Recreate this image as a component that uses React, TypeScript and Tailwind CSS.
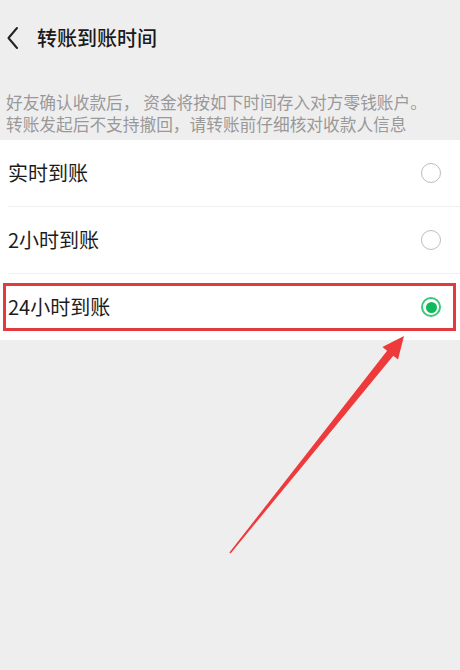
import React from "react";

function Radio({ checked }: { checked?: boolean }) {
  if (checked) {
    return (
      <div className="w-[20px] h-[20px] rounded-full border-[2px] border-[#3cc879] flex items-center justify-center">
        <div className="w-[11px] h-[11px] rounded-full bg-[#0dbb5c]" />
      </div>
    );
  }
  return <div className="w-[20px] h-[20px] rounded-full border-[1.5px] border-[#bcbcbc]" />;
}

function Row({ label, checked }: { label: string; checked?: boolean }) {
  return (
    <div className="h-[66px] flex items-center justify-between pl-[8px] pr-[19px]">
      <span className="text-[20px] text-[#1c1c1c] leading-none">{label}</span>
      <Radio checked={checked} />
    </div>
  );
}

export default function App() {
  return (
    <div
      className="relative w-[460px] h-[670px] overflow-hidden bg-[#efeeef]"
      style={{ fontFamily: '"Noto Sans CJK SC", "Noto Sans", sans-serif' }}
    >
      <div className="h-[76px] flex items-center">
        <svg width="30" height="30" viewBox="0 0 30 30" className="ml-[2px]">
          <path d="M15 8 L6.5 18 L15 28" fill="none" stroke="#222" strokeWidth="2" strokeLinecap="round" strokeLinejoin="round" transform="translate(0,-3)" />
        </svg>
        <span className="ml-[5px] text-[20px] font-medium text-[#1a1a1a] leading-none">转账到账时间</span>
      </div>
      <div className="pt-[15px] pb-[5px] pl-[6px] text-[16.7px] leading-[22px] text-[#999999] whitespace-nowrap">
        <div>好友确认收款后， 资金将按如下时间存入对方零钱账户。</div>
        <div>转账发起后不支持撤回，请转账前仔细核对收款人信息</div>
      </div>
      <div className="bg-white">
        <Row label="实时到账" />
        <div className="ml-[8px] border-t border-[#efefef]" />
        <Row label="2小时到账" />
        <div className="ml-[8px] border-t border-[#efefef]" />
        <Row label="24小时到账" checked />
      </div>

      <div className="absolute left-[3px] top-[283px] w-[453px] h-[48px] border-[3px] border-[#e4393d]" />

      <svg className="absolute left-0 top-0" width="460" height="670" viewBox="0 0 460 670">
        <polygon
          points="229.4,552.5 387.1,350.7 382.4,346.9 404,336 398,359.5 393.3,355.7 230.6,553.5"
          fill="#ee3a3a"
        />
      </svg>
    </div>
  );
}
